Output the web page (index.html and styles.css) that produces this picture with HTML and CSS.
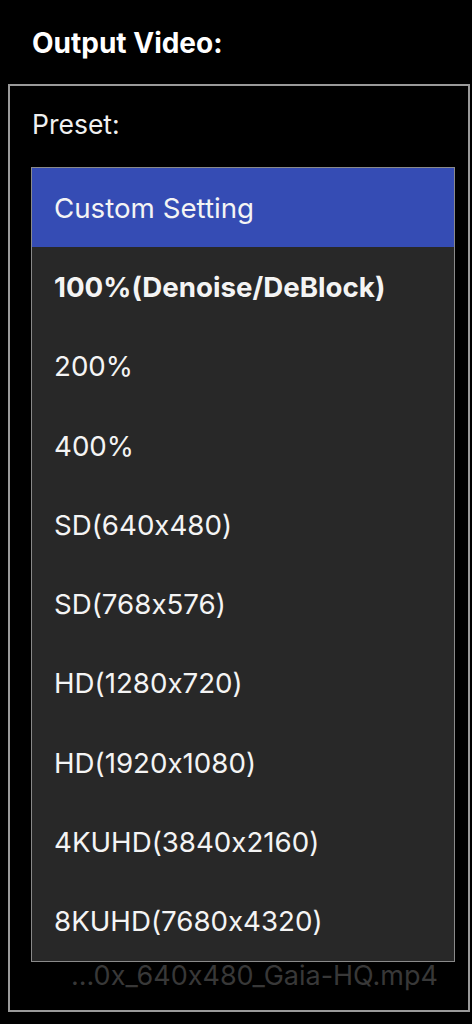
FILE: index.html
```html
<!DOCTYPE html>
<html lang="en">
<head>
  <meta charset="UTF-8">
  <meta name="viewport" content="width=device-width, initial-scale=1.0">
  <title>Output Video</title>
  <link rel="stylesheet" href="styles.css">
</head>
<body>
  <h2 class="section-title">Output Video:</h2>
  <div class="output-box">
    <div class="field-label">Preset:</div>
    <ul class="preset-list">
      <li class="preset-item selected">Custom Setting</li>
      <li class="preset-item bold">100%(Denoise/DeBlock)</li>
      <li class="preset-item">200%</li>
      <li class="preset-item">400%</li>
      <li class="preset-item">SD(640x480)</li>
      <li class="preset-item">SD(768x576)</li>
      <li class="preset-item">HD(1280x720)</li>
      <li class="preset-item">HD(1920x1080)</li>
      <li class="preset-item">4KUHD(3840x2160)</li>
      <li class="preset-item">8KUHD(7680x4320)</li>
    </ul>
    <div class="file-name">...0x_640x480_Gaia-HQ.mp4</div>
  </div>
</body>
</html>
```

FILE: styles.css
```css
body {
  margin: 0;
  background-color: #000;
  color: #fff;
  font-family: Inter, "Open Sans", sans-serif;
  font-feature-settings: "calt" 0;
  height: 1024px;
  overflow: hidden;
}

.section-title {
  margin: 0;
  padding: 26px 0 0 32px;
  height: 84px;
  box-sizing: border-box;
  font-size: 28px;
  line-height: 34px;
  font-weight: 700;
}

.output-box {
  margin-left: 8px;
  width: 462px;
  height: 928px;
  box-sizing: border-box;
  border: 2px solid #9a9a9a;
  overflow: hidden;
}

.field-label {
  padding: 21px 0 0 22px;
  height: 81px;
  box-sizing: border-box;
  font-size: 26.5px;
  line-height: 34px;
  color: #f0f0f0;
}

.preset-list {
  list-style: none;
  margin: 0 0 0 21px;
  padding: 0;
  width: 424px;
  box-sizing: border-box;
  border: 1px solid #8a8a8a;
  background-color: #282828;
}

.preset-item {
  height: 79.3px;
  display: flex;
  align-items: center;
  padding-left: 22px;
  font-size: 27.7px;
  color: #f4f4f4;
}

.preset-item.selected {
  background-color: #354cb4;
}

.preset-item.bold {
  font-weight: 700;
}

.file-name {
  width: 428px;
  text-align: right;
  margin-top: -1px;
  font-size: 27px;
  line-height: 30px;
  color: #383838;
}
```
